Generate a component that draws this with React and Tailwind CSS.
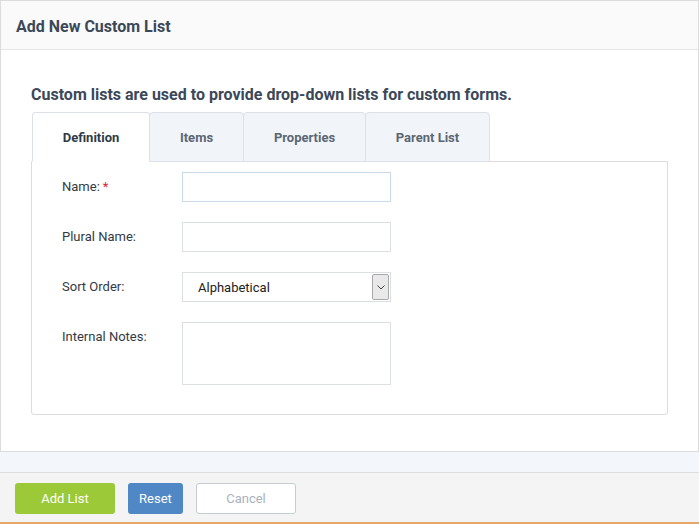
import React from 'react';

const TABS = ['Definition', 'Items', 'Properties', 'Parent List'];
const TAB_WIDTHS = ['w-[118px]', 'w-[95px]', 'w-[123px]', 'w-[125px]'];

function Field({ label, required, children }) {
  return (
    <div className="flex items-start">
      <div className="w-[120px] pt-[5px] text-[13px] text-[#333a44]">
        {label}
        {required && <span className="text-[#e0262b] ml-[3px]">*</span>}
      </div>
      {children}
    </div>
  );
}

export default function App() {
  return (
    <div className="w-[699px] h-[524px] flex flex-col bg-[#f3f7fb] font-['Roboto',sans-serif]">
      <div className="h-[452px] border border-[#dcdcdc] bg-white flex flex-col">
        <div className="h-[49px] shrink-0 bg-[#fafafa] border-b border-[#e6e6e6] flex items-center px-[15px] pt-[3px]">
          <h1 className="text-[16px] font-bold text-[#3c4858]">Add New Custom List</h1>
        </div>
        <div className="px-[30px] pt-[35px]">
          <p className="text-[16px] font-bold text-[#3c4858] leading-[20px]">
            Custom lists are used to provide drop-down lists for custom forms.
          </p>
          <div className="mt-[7px] flex pl-[1px]">
            {TABS.map((t, i) => (
              <div
                key={t}
                className={`${TAB_WIDTHS[i]} h-[50px] flex items-center justify-center pt-[1px] text-[13px] font-bold rounded-t-[4px] border border-[#dbe1e7] ${
                  i === 0
                    ? 'bg-white text-[#2f3a48] border-b-white relative z-10'
                    : 'bg-[#f1f5f9] text-[#5c6673] -ml-px'
                }`}
              >
                {t}
              </div>
            ))}
          </div>
          <div className="-mt-px w-[637px] h-[254px] border border-[#dcdcdc] rounded-b-[3px] pl-[30px] pt-[10px] flex flex-col gap-[20px]">
            <Field label="Name:" required>
              <input className="w-[209px] h-[30px] border border-[#c8d9ea] outline-none" />
            </Field>
            <Field label="Plural Name:">
              <input className="w-[209px] h-[30px] border border-[#dcdfe3] outline-none" />
            </Field>
            <Field label="Sort Order:">
              <div className="w-[209px] h-[30px] border border-[#dcdfe3] flex items-center justify-between pl-[15px] pr-[1px]">
                <span className="text-[13px] text-[#222] pt-[2px]">Alphabetical</span>
                <div className="w-[17px] h-[26px] bg-[#e9e9e9] border border-[#a8a8a8] rounded-[2px] flex items-center justify-center">
                  <svg width="8" height="5" viewBox="0 0 8 5" fill="none">
                    <path d="M0.5 0.5 L4 4 L7.5 0.5" stroke="#444" strokeWidth="1" />
                  </svg>
                </div>
              </div>
            </Field>
            <Field label="Internal Notes:">
              <textarea className="w-[209px] h-[63px] border border-[#dcdfe3] outline-none resize-none" />
            </Field>
          </div>
        </div>
      </div>
      <div className="mt-[20px] flex-1 bg-[#f4f4f4] border-t border-[#dedede] border-b-2 border-b-[#e8a76a] flex items-start gap-[13px] pl-[15px] pt-[10px]">
        <button className="w-[100px] h-[31px] rounded-[3px] bg-[#9cc938] text-white text-[13px]">Add List</button>
        <button className="w-[55px] h-[31px] rounded-[3px] bg-[#5088c6] text-white text-[13px]">Reset</button>
        <button className="w-[100px] h-[31px] rounded-[3px] bg-white border border-[#c6ccd4] text-[#a9b2bd] text-[13px]">Cancel</button>
      </div>
    </div>
  );
}
